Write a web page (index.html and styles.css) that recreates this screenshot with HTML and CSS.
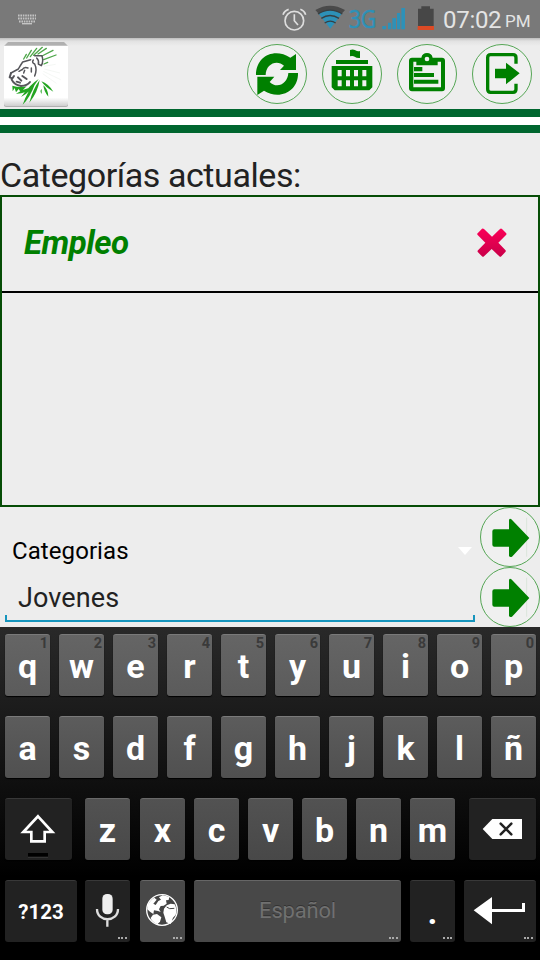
FILE: index.html
```html
<!DOCTYPE html>
<html lang="es">
<head>
<meta charset="utf-8">
<title>Categorías</title>
<link rel="stylesheet" href="styles.css">
</head>
<body>
<div class="screen">
  <div class="status">
    <svg class="status-kb" width="20" height="12" viewBox="0 0 20 12"><path d="M1 2.5H19M1 5.5H19M2 8.5H18" stroke="#c4c4c4" stroke-width="2" stroke-dasharray="1.6 .8"/><path d="M5 10.7H15" stroke="#c4c4c4" stroke-width="1.4"/></svg>
    <svg class="status-icons" width="164" height="38" viewBox="36 0 492 114">
      <g fill="none" stroke="#dedede" stroke-width="5"><circle cx="73" cy="62" r="28"/><path d="M73 43V62L84 75M39 44Q43 32 56 28M91 28Q103 32 107 44"/></g>
      <path d="M136 30Q180 4 225 30L211 46Q180 27 150 46Z" fill="#4a4a4a"/>
      <path d="M146 41Q180 19 215 41L181 86Z" fill="#2d91b8"/>
      <path d="M144 42Q180 19 217 42M154 55Q180 38 207 55M164 69Q181 58 197 69" fill="none" stroke="#373f43" stroke-width="4"/>
      <g fill="#2d91b8"><path d="M337 78h11v10h-11zM354 68h10v20h-10zM367 54h11v34h-11zM381 39h10v49h-10zM394 24h11v64h-11z"/></g>
      <path d="M444 26h10v-7h26v7h11v52h-47z" fill="#474747"/><path d="M443 78h49v12h-49z" fill="#dc4a25"/>
      <text class="net" x="236" y="83" textLength="83" lengthAdjust="spacingAndGlyphs">3G</text>
    </svg>
    <span class="time">07:02</span><span class="pm">PM</span>
  </div>

  <div class="header">
    <svg class="logo" width="66" height="68" viewBox="9 123 198 204">
      <defs>
        <linearGradient id="card" x1="0" y1="0" x2="0" y2="1"><stop offset="0" stop-color="#fff"/><stop offset=".86" stop-color="#fff"/><stop offset="1" stop-color="#cfcfcf"/></linearGradient>
      </defs>
      <path d="M24 126H192L204 138V316Q204 321 198 321H18Q12 321 12 316V138Z" fill="#b0b0b0"/>
      <path d="M12 137H204V312Q204 318 198 318H18Q12 318 12 312Z" fill="url(#card)"/>
      <g fill="none" stroke="#4fa74b" stroke-width="4" stroke-linecap="round">
        <path d="M71 177L79 163M80 174L94 151M91 170L110 145M101 166L127 142M114 162L139 145M126 168L159 151M131 179L168 165M132 192L143 187"/>
      </g>
      <g fill="#24a522">
        <path d="M116 237Q92 252 63 291Q91 278 116 237ZM119 240Q99 266 88 308Q114 276 119 240ZM107 247Q83 272 68 314Q90 294 107 247ZM98 260Q72 266 48 281Q77 282 98 260ZM124 244Q136 262 160 275Q145 251 124 244ZM130 256Q132 276 145 290Q144 267 130 256ZM125 267Q118 273 125 282ZM37 257L38 274L44 264L48 277L56 267L62 276L80 259Q58 264 37 257Z"/>
      </g>
      <g fill="none" stroke="#55555a" stroke-width="4.5" stroke-linejoin="round" stroke-linecap="round">
        <path d="M104 167L126 167Q131 184 124 197L115 192Q118 182 110 174M100 180Q94 188 104 192Q112 208 104 228M92 179L68 186Q60 198 55 207L33 219M57 214L66 209M66 210Q72 199 84 204M74 211L71 219M94 204V216"/>
        <path d="M33 219L29 232L37 235L42 228M35 239Q43 255 63 258Q82 257 90 246M54 232L64 242M67 228L80 237M50 245L60 248" stroke-width="6"/>
      </g>
      <path d="M132 199L167 193M133 207L180 219M130 214L182 239M128 221L169 250" stroke="#eef3ee" stroke-width="2"/>
    </svg>
    <div class="actions">
      <svg class="action" viewBox="21 24 180 180"><circle class="ring" cx="111" cy="114" r="88.5"/>
        <path d="M48 117C48 59 104 34 151 65L168 54V102H120L132 89C111 69 77 84 77 117ZM174 111C176 164 120 195 72 164L52 177V122H103L89 138C112 161 144 141 145 111Z"/></svg>
      <svg class="action" viewBox="246 24 180 180"><circle class="ring" cx="336" cy="114" r="88.5"/>
        <path fill-rule="evenodd" d="M330 42Q339 38 346 43Q353 47 360 45V66Q350 67 344 62Q338 58 330 61ZM288 72H384V84H288ZM275 90H397V154L388 163H284L275 154ZM293 102V121H305V102ZM318 102V121H330V102ZM342 102V121H354V102ZM367 102V121H379V102ZM293 133V151H305V133ZM318 133V151H330V133ZM342 133V151H354V133ZM367 133V151H379V133Z"/></svg>
      <svg class="action" viewBox="21 24 180 180"><circle class="ring" cx="111" cy="114" r="88.5"/>
        <path fill-rule="evenodd" d="M66 65H94Q97 51 111 51Q125 51 128 65H156Q165 65 165 74V157Q165 166 156 166H66Q57 166 57 157V74Q57 65 66 65ZM70 77V154H153V77H143V88H79V77ZM111 62A7 7 0 1 0 111 76A7 7 0 1 0 111 62Z"/><path d="M72 93H97V106H72ZM72 111H132V123H72ZM72 131H145V143H72Z"/></svg>
      <svg class="action" viewBox="246 24 180 180"><circle class="ring" cx="336" cy="114" r="88.5"/>
        <path d="M378 83V65Q378 56 369 56H302Q293 56 293 65V160Q293 169 302 169H369Q378 169 378 160V143" fill="none" stroke="#008000" stroke-width="10"/><path d="M315 98H348V80L389 112L348 145V127H315Z"/></svg>
    </div>
  </div>
  <div class="stripes"></div>

  <h1 class="title">Categorías actuales:</h1>
  <div class="list">
    <div class="item">
      <span class="item-name">Empleo</span>
      <svg width="30" height="30" viewBox="172 115 90 90"><defs><linearGradient id="red" x1="0" y1="0" x2="0" y2="1"><stop offset="0" stop-color="#fb0057"/><stop offset="1" stop-color="#c90049"/></linearGradient></defs>
        <path fill="url(#red)" d="M174 131L187 117Q190 115 193 118L217 141L241 118Q244 115 247 118L259 130Q262 133 259 136L236 159L257 181Q260 184 257 187L245 200Q242 203 239 200L216 178L193 200Q190 203 187 200L175 188Q172 185 175 182L197 159L174 136Q171 133 174 131Z"/></svg>
    </div>
  </div>

  <div class="form">
    <div class="fields">
      <div class="spinner"><span>Categorias</span><svg width="14" height="8" viewBox="0 0 14 8"><path d="M0 0H14L7 8Z" fill="#fff"/></svg></div>
      <div class="input"><span>Jovenes</span></div>
    </div>
    <div class="go">
      <svg class="action" viewBox="240 21 180 180"><circle class="ring" cx="330" cy="111" r="88.5"/><path d="M380 53V170" stroke="#dbe5db" stroke-width="3"/><path d="M283 88H327V60Q329 54 334 58L388 114L336 170Q330 173 327 168V140H283Q277 140 277 134V94Q277 88 283 88Z"/></svg>
      <svg class="action" viewBox="240 21 180 180"><circle class="ring" cx="330" cy="111" r="88.5"/><path d="M380 53V170" stroke="#dbe5db" stroke-width="3"/><path d="M283 88H327V60Q329 54 334 58L388 114L336 170Q330 173 327 168V140H283Q277 140 277 134V94Q277 88 283 88Z"/></svg>
    </div>
  </div>

  <div class="keyboard">
    <div class="row r1">
      <div class="key"><i>1</i>q</div><div class="key"><i>2</i>w</div><div class="key"><i>3</i>e</div><div class="key"><i>4</i>r</div><div class="key"><i>5</i>t</div><div class="key"><i>6</i>y</div><div class="key"><i>7</i>u</div><div class="key"><i>8</i>i</div><div class="key"><i>9</i>o</div><div class="key"><i>0</i>p</div>
    </div>
    <div class="row r2">
      <div class="key">a</div><div class="key">s</div><div class="key">d</div><div class="key">f</div><div class="key">g</div><div class="key">h</div><div class="key">j</div><div class="key">k</div><div class="key">l</div><div class="key">ñ</div>
    </div>
    <div class="row r3">
      <div class="key dark shift"><svg width="67" height="62" viewBox="15 54 201 186"><path d="M114 109L157 156H134V184H94V156H70Z" fill="none" stroke="#fff" stroke-width="8"/><path d="M84 219H144V230H84Z" fill="#000"/><path d="M84 232H144" stroke="#444" stroke-width="2"/></svg></div>
      <div class="key z">z</div><div class="key">x</div><div class="key">c</div><div class="key">v</div><div class="key">b</div><div class="key">n</div><div class="key">m</div>
      <div class="key dark del"><svg width="67" height="62" viewBox="207 54 201 186"><path d="M248 147L277 117H366V177H277Z" fill="#fff"/><path d="M302 131L334 163M334 131L302 163" stroke="#222" stroke-width="7.5" stroke-linecap="round"/></svg></div>
    </div>
    <div class="row r4">
      <div class="key dark sym">?123</div>
      <div class="key dark mic"><svg width="45" height="62" viewBox="255 300 135 186"><rect x="307" y="342" width="31" height="61" rx="14" fill="#eee"/><path d="M291 387C291 428 354 428 354 387M322 417V440" fill="none" stroke="#ddd" stroke-width="7"/></svg><b></b></div>
      <div class="key globe"><svg width="45" height="62" viewBox="420 300 135 186"><circle cx="486" cy="390" r="46" fill="#454545" stroke="#fff" stroke-width="4"/><g fill="#fff"><path d="M443 376Q451 359 463 353L470 359L460 371L467 375L475 363L483 359L477 352L488 346L508 350L506 360L498 361L500 371L491 377L482 378L477 388L482 396L474 393L462 391L460 402L450 395L442 388Z"/><path d="M459 404L471 402L484 412L480 425L472 433Q456 426 452 414Z"/><path d="M500 376L512 371L524 373Q532 388 527 405L519 413L512 432L499 427L494 410L490 398L492 386Z"/></g><path d="M500 381L509 386L523 385" fill="none" stroke="#454545" stroke-width="3"/></svg><b></b></div>
      <div class="key space"><span>Español</span><b></b></div>
      <div class="key dark dot"><span>.</span><b></b></div>
      <div class="key dark enter"><svg width="72" height="62" viewBox="192 300 216 186"><path d="M221 391L276 351V387H366V369H375V396H276V433Z" fill="#fff"/></svg><b></b></div>
    </div>
  </div>
</div>
</body>
</html>
```
FILE: styles.css
```css
* { box-sizing: border-box; }
body { margin: 0; font-family: Roboto, sans-serif; background: #ededed; }
svg { display: block; flex: none; }
.screen { width: 540px; height: 960px; overflow: hidden; display: flex; flex-direction: column; }
.status { height: 38px; flex: none; background: #797979; display: flex; color: #e4e4e4; white-space: nowrap; }
.status-kb { margin: 13px 0 0 17px; }
.status-icons { margin-left: 245px; }
.net { font-family: "Open Sans", sans-serif; font-size: 78px; fill: #2d91b8; stroke: #2d91b8; stroke-width: 1.5px; }
.time { font-size: 24px; line-height: 38px; margin-left: -3px; padding-top: 1px; width: 62px; letter-spacing: -.3px; }
.pm { font-size: 17px; line-height: 43px; }
.header { height: 71px; flex: none; display: flex; justify-content: space-between; background: linear-gradient(#bdbdbd 0, #e2e2e2 3px, #ededed 8px); padding: 3px 8px 0 3px; }
.actions { display: flex; gap: 15px; padding-top: 3px; }
.action { width: 60px; height: 60px; fill: #008000; }
.ring { fill: #f0f0f0; stroke: #3d9a3d; stroke-width: 2.6; }
.stripes { height: 24px; flex: none; background: #fff; border: solid #00662f; border-width: 8px 0; }
.title { margin: 0; height: 62px; flex: none; padding-top: 21px; font-size: 34px; letter-spacing: -.43px; font-weight: 400; line-height: 42px; color: #222; white-space: nowrap; }
.list { height: 312px; flex: none; border: 2px solid #064d06; }
.item { height: 96px; border-bottom: 2px solid #000; display: flex; align-items: center; justify-content: space-between; padding: 0 31px 2px 22px; }
.item-name { font: italic 700 33px/40px Roboto, sans-serif; letter-spacing: -.5px; color: #008000; }
.form { height: 120px; flex: none; display: flex; }
.fields { width: 480px; }
.spinner { height: 67px; padding: 20px 8px 0 12px; display: flex; justify-content: space-between; align-items: center; font-size: 24px; letter-spacing: .08px; color: #000; }
.input { height: 48px; margin: 0 5px; padding-left: 13px; font-size: 27px; letter-spacing: .1px; line-height: 48px; color: #222; border-bottom: 2px solid #1695bd; background: linear-gradient(#1695bd, #1695bd) left bottom / 2px 5px no-repeat, linear-gradient(#1695bd, #1695bd) right bottom / 2px 5px no-repeat; }
.keyboard { height: 333px; flex: none; background: linear-gradient(#292929 0, #000 75%); padding: 7px 4px 0 5px; display: flex; flex-direction: column; gap: 20px; }
.row { display: flex; gap: 9px; height: 62px; }
.key { position: relative; width: 45px; flex: none; height: 62px; border-radius: 3px; background: #5f5f5f; border-top: 1px solid #7a7a7a; box-shadow: 0 1px 1px #000; color: #fff; font-weight: 700; font-size: 34px; line-height: 62px; text-align: center; }
.key svg { margin-top: -1px; }
.key.shift, .key.del { width: 67px; }
.key.sym, .key.enter { width: 72px; }
.key.space { width: 207px; }
.key.z { margin: 0 1px 0 4px; }
.key.del { margin-left: 5px; }
.key.mic { margin: 0 1px 0 -1px; }
.r1 .key { background: linear-gradient(#656565, #5b5b5b); }
.r2 .key { background: linear-gradient(#5c5c5c, #505050); }
.r3 .key { background: linear-gradient(#525252, #484848); border-top-color: #696969; }
.r4 .key { background: #484848; border-top-color: #666; }
.row .key.dark { background: #222; border-top-color: #383838; }
.key i { position: absolute; right: 2px; top: 0; font: 700 14.5px/18px Roboto, sans-serif; color: #3a3a3a; }
.key b { position: absolute; right: 3px; bottom: 3px; width: 9px; height: 2px; background: repeating-linear-gradient(90deg, #aaa 0 2px, transparent 2px 3.5px); }
.key.sym { font-size: 20.5px; }
.space span { font-size: 22px; font-weight: 400; letter-spacing: -.2px; line-height: 60px; color: #707070; text-shadow: 0 -1px #333; display: block; }
```
